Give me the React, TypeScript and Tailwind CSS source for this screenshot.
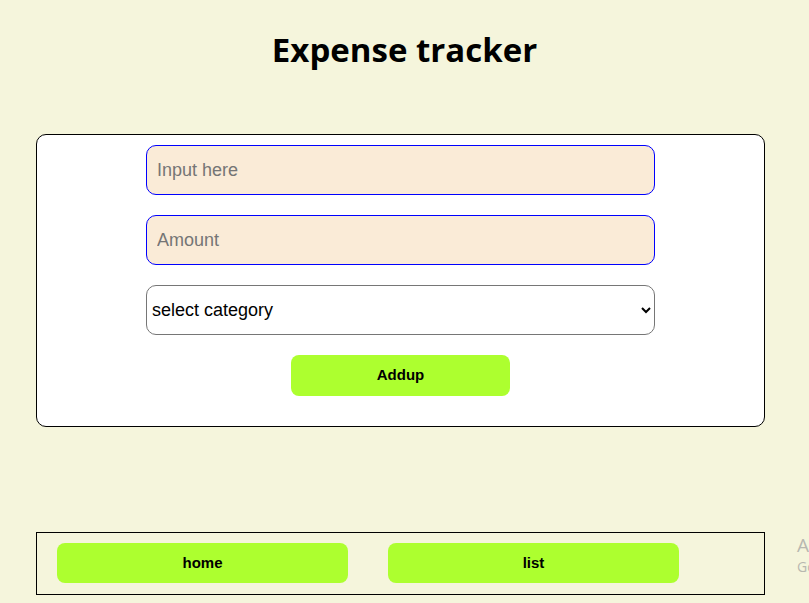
export default function App() {
  return (
    <div className="relative min-h-[603px] w-full overflow-hidden bg-[#f5f5dc] pt-[28px] font-['Liberation_Sans',Arial,sans-serif]">
      <h1 className="text-center font-['Open_Sans',sans-serif] text-[33px] font-bold leading-[44px] text-black">
        Expense tracker
      </h1>

      {/* form card */}
      <div className="ml-[36px] mt-[62px] w-[729px] rounded-[10px] border border-black bg-white pt-[10px] pb-[30px]">
        <form className="flex flex-col items-center gap-[20px]" onSubmit={(e) => e.preventDefault()}>
          <input
            type="text"
            placeholder="Input here"
            className="h-[50px] w-[509px] rounded-[10px] border border-[#0000ff] bg-[#faebd7] px-[10px] text-[18px] text-black outline-none placeholder:text-[#757575]"
          />
          <input
            type="number"
            placeholder="Amount"
            className="h-[50px] w-[509px] rounded-[10px] border border-[#0000ff] bg-[#faebd7] px-[10px] text-[18px] text-black outline-none placeholder:text-[#757575]"
          />
          <select
            defaultValue=""
            className="h-[50px] w-[509px] rounded-[10px] border border-[#767676] bg-white px-[1px] text-[18px] text-black"
          >
            <option value="">select category</option>
            <option value="food">food</option>
            <option value="travel">travel</option>
            <option value="bills">bills</option>
          </select>
          <button
            type="submit"
            className="h-[41px] w-[219px] rounded-[8px] bg-[#adff2f] text-[15px] font-bold text-black"
          >
            Addup
          </button>
        </form>
      </div>

      {/* bottom nav */}
      <nav className="ml-[36px] mt-[105px] flex w-[729px] gap-[40px] border border-black px-[20px] pt-[10px] pb-[11px]">
        <button className="h-[40px] w-[291px] rounded-[8px] bg-[#adff2f] pt-[1px] text-[15px] font-bold text-black">
          home
        </button>
        <button className="h-[40px] w-[291px] rounded-[8px] bg-[#adff2f] pt-[1px] text-[15px] font-bold text-black">
          list
        </button>
      </nav>

      {/* windows watermark */}
      <div className="pointer-events-none absolute left-[797px] top-[532px] whitespace-nowrap font-['Open_Sans',sans-serif] text-[#b8b8b0]">
        <div className="text-[19px] leading-[26px]">Activate Windows</div>
        <div className="text-[14px] leading-[18px]">Go to Settings to activate Windows.</div>
      </div>
    </div>
  );
}
